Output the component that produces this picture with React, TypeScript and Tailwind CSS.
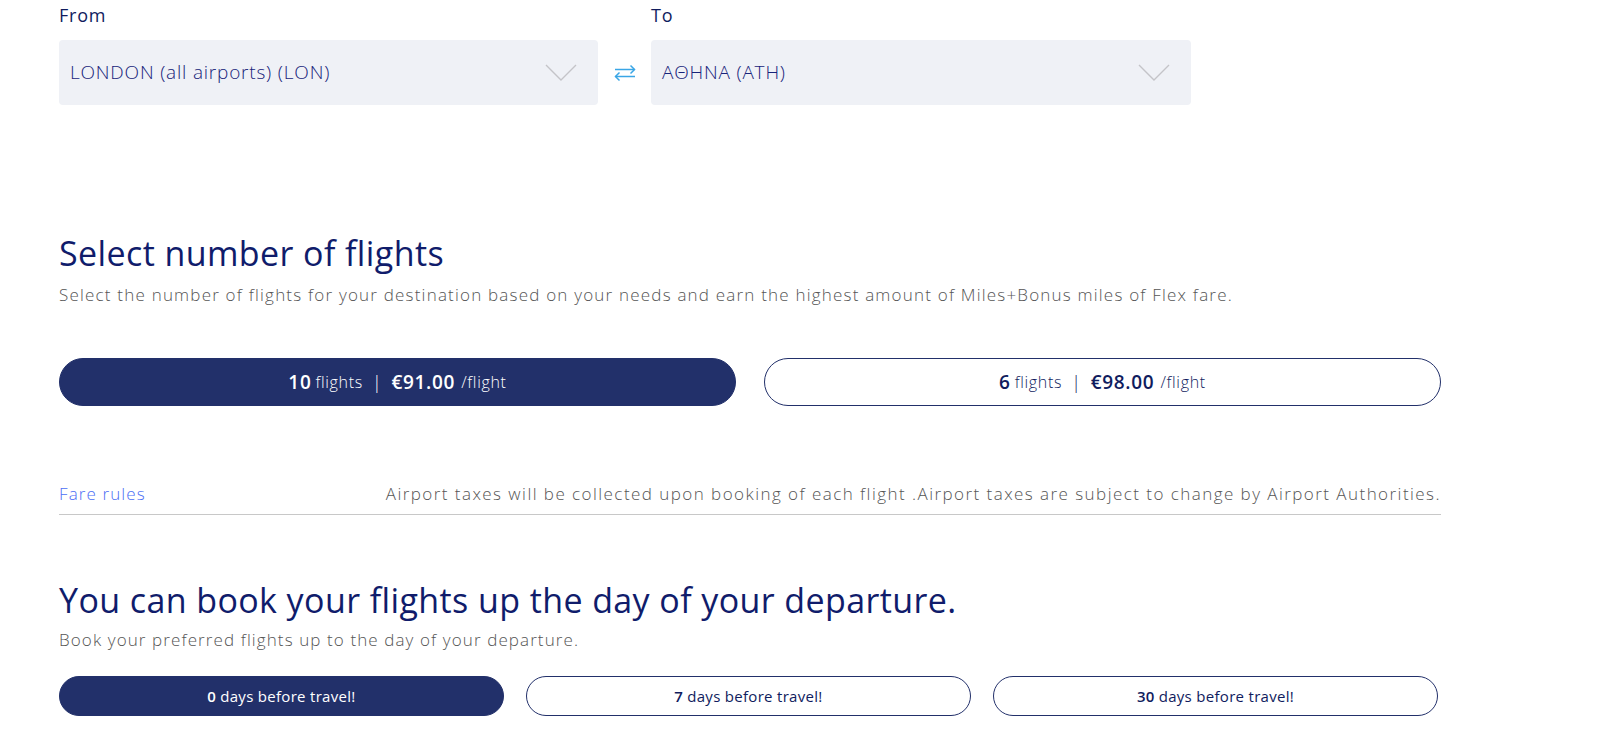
import * as React from "react";

// Route selector + flight bundle options

function Chevron() {
  return (
    <svg width="32" height="17" viewBox="0 0 32 17" fill="none" className="shrink-0">
      <path d="M1 1 L16 16 L31 1" stroke="#c4c4c8" strokeWidth="1.4" />
    </svg>
  );
}

function SwapIcon() {
  return (
    <svg width="24" height="24" viewBox="0 0 24 24" fill="none" stroke="#3aa6e6" strokeWidth="1.5">
      <path d="M2 8.5 H21.5" />
      <path d="M17.5 4.5 L21.5 8.5 L17.5 12.5" />
      <path d="M22 15.5 H2.5" />
      <path d="M6.5 11.5 L2.5 15.5 L6.5 19.5" />
    </svg>
  );
}

function SelectBox({ value }: { value: string }) {
  return (
    <div className="flex h-[65px] items-center justify-between rounded-[4px] bg-[#eff1f6] pl-[11px] pr-[21px]">
      <span className="text-[19px] font-light tracking-[0.8px] text-[#17237a]">{value}</span>
      <Chevron />
    </div>
  );
}

const flightOptions = [
  { count: 10, price: "€91.00", selected: true },
  { count: 6, price: "€98.00", selected: false },
];

const dayOptions = [
  { days: 0, selected: true },
  { days: 7, selected: false },
  { days: 30, selected: false },
];

export default function App() {
  return (
    <div className="min-h-[746px] bg-white font-['Open_Sans',sans-serif] text-[#101c6b]">
      <div className="w-[1382px] pl-[59px] box-content">
        {/* route */}
        <div className="flex items-end">
          <div className="w-[539px]">
            <div className="mb-[10px] text-[18px] leading-[30px] font-medium tracking-[0.8px] text-[#101c5e]">From</div>
            <SelectBox value="LONDON (all airports) (LON)" />
          </div>
          <div className="flex h-[65px] w-[53px] items-center justify-center">
            <SwapIcon />
          </div>
          <div className="w-[540px]">
            <div className="mb-[10px] text-[18px] leading-[30px] font-medium tracking-[0.8px] text-[#101c5e]">To</div>
            <SelectBox value="ΑΘΗΝΑ (ΑΤΗ)" />
          </div>
        </div>

        {/* number of flights */}
        <h2 className="mt-[128px] text-[34px] leading-[40px] font-medium tracking-[0.4px] text-[#101c6b]">
          Select number of flights
        </h2>
        <p className="mt-[10px] text-[17px] leading-[24px] font-light tracking-[1.2px] text-[#555]">
          Select the number of flights for your destination based on your needs and earn the highest amount of Miles+Bonus miles of Flex fare.
        </p>
        <div className="mt-[51px] grid grid-cols-2 gap-[28px]">
          {flightOptions.map((o) => (
            <button
              key={o.count}
              className={
                o.selected
                  ? "flex h-[48px] items-center justify-center rounded-full border border-[#22306a] bg-[#22306a] tracking-[0.7px] text-white"
                  : "flex h-[48px] items-center justify-center rounded-full border border-[#22306a] bg-white tracking-[0.7px] text-[#101c5e]"
              }
            >
              <span className="text-[19px] font-semibold">{o.count}</span>
              <span className="ml-[4px] text-[16px] font-light">flights</span>
              <span className="mx-[9px] text-[18px] font-light">|</span>
              <span className="text-[19px] font-semibold">{o.price}</span>
              <span className="ml-[6px] text-[16px] font-light">/flight</span>
            </button>
          ))}
        </div>

        {/* fare rules */}
        <div className="mt-[76px] flex items-center justify-between border-b border-[#c8c8c8] pb-[8px] leading-[24px]">
          <a className="text-[17px] font-light tracking-[1.1px] text-[#4c6ef5]">Fare rules</a>
          <span className="text-[17px] font-light tracking-[1.45px] text-[#555]">
            Airport taxes will be collected upon booking of each flight .Airport taxes are subject to change by Airport Authorities.
          </span>
        </div>

        {/* days before */}
        <h2 className="mt-[65px] text-[34px] leading-[40px] font-medium tracking-[0.4px] text-[#101c6b]">
          You can book your flights up the day of your departure.
        </h2>
        <p className="mt-[8px] text-[17px] leading-[24px] font-light tracking-[1.1px] text-[#555]">
          Book your preferred flights up to the day of your departure.
        </p>
        <div className="mt-[24px] grid w-[1379px] grid-cols-3 gap-[22px]">
          {dayOptions.map((d) => (
            <button
              key={d.days}
              className={
                d.selected
                  ? "flex h-[40px] items-center justify-center rounded-full border border-[#22306a] bg-[#22306a] text-[15px] tracking-[0.3px] text-white"
                  : "flex h-[40px] items-center justify-center rounded-full border border-[#22306a] bg-white text-[15px] tracking-[0.3px] text-[#101c5e]"
              }
            >
              <span className="font-semibold">{d.days}</span>
              <span className="ml-[4px]">days before travel!</span>
            </button>
          ))}
        </div>
      </div>
    </div>
  );
}
